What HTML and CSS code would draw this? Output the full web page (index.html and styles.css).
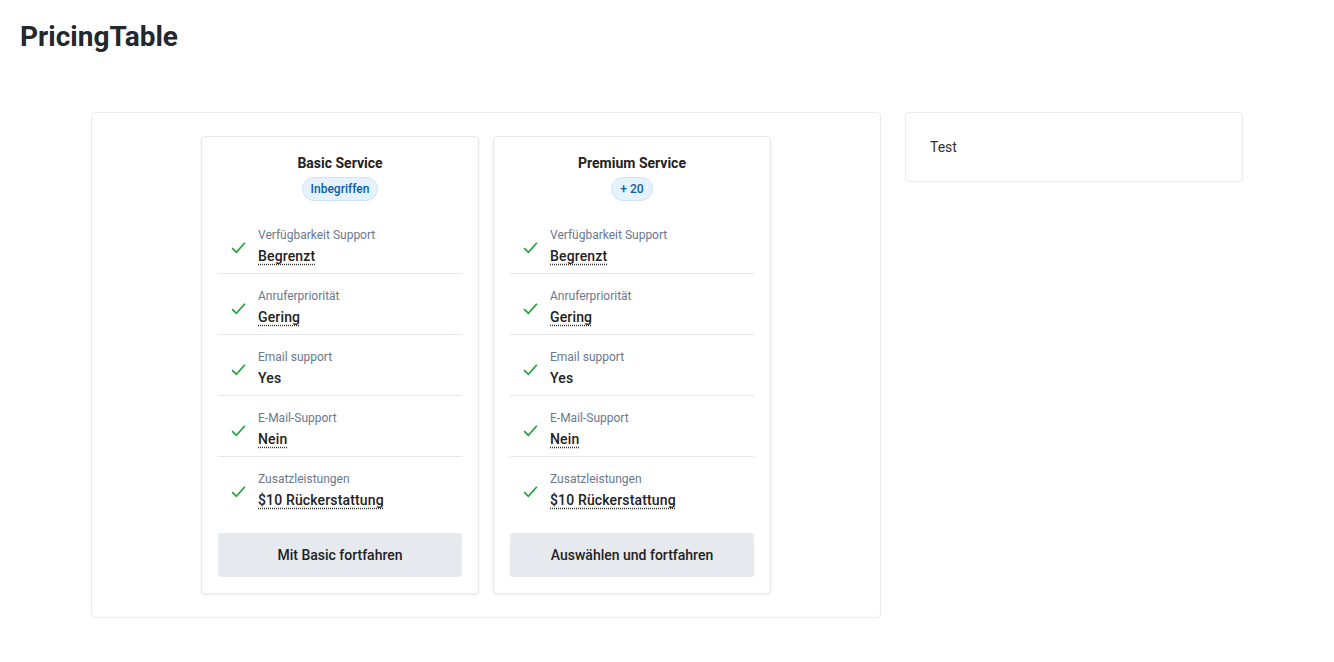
FILE: index.html
```html
<!DOCTYPE html>
<html lang="de">
<head>
<meta charset="utf-8">
<title>PricingTable</title>
<link rel="stylesheet" href="styles.css">
</head>
<body>
<h1 class="page-title">PricingTable</h1>
<div class="layout">
  <div class="panel main-panel">
    <div class="plans">
      <div class="plan">
        <div class="plan-head">
          <div class="plan-name">Basic Service</div>
          <span class="badge">Inbegriffen</span>
        </div>
        <ul class="features">
          <li class="feature"><svg class="check" viewBox="0 0 16 16"><path d="M2 8.5l4 4 8-9"/></svg><div><div class="f-label">Verfügbarkeit Support</div><div class="f-value dotted">Begrenzt</div></div></li>
          <li class="feature"><svg class="check" viewBox="0 0 16 16"><path d="M2 8.5l4 4 8-9"/></svg><div><div class="f-label">Anruferpriorität</div><div class="f-value dotted">Gering</div></div></li>
          <li class="feature"><svg class="check" viewBox="0 0 16 16"><path d="M2 8.5l4 4 8-9"/></svg><div><div class="f-label">Email support</div><div class="f-value">Yes</div></div></li>
          <li class="feature"><svg class="check" viewBox="0 0 16 16"><path d="M2 8.5l4 4 8-9"/></svg><div><div class="f-label">E-Mail-Support</div><div class="f-value dotted">Nein</div></div></li>
          <li class="feature"><svg class="check" viewBox="0 0 16 16"><path d="M2 8.5l4 4 8-9"/></svg><div><div class="f-label">Zusatzleistungen</div><div class="f-value dotted">$10 Rückerstattung</div></div></li>
        </ul>
        <button class="btn">Mit Basic fortfahren</button>
      </div>
      <div class="plan">
        <div class="plan-head">
          <div class="plan-name">Premium Service</div>
          <span class="badge">+ 20</span>
        </div>
        <ul class="features">
          <li class="feature"><svg class="check" viewBox="0 0 16 16"><path d="M2 8.5l4 4 8-9"/></svg><div><div class="f-label">Verfügbarkeit Support</div><div class="f-value dotted">Begrenzt</div></div></li>
          <li class="feature"><svg class="check" viewBox="0 0 16 16"><path d="M2 8.5l4 4 8-9"/></svg><div><div class="f-label">Anruferpriorität</div><div class="f-value dotted">Gering</div></div></li>
          <li class="feature"><svg class="check" viewBox="0 0 16 16"><path d="M2 8.5l4 4 8-9"/></svg><div><div class="f-label">Email support</div><div class="f-value">Yes</div></div></li>
          <li class="feature"><svg class="check" viewBox="0 0 16 16"><path d="M2 8.5l4 4 8-9"/></svg><div><div class="f-label">E-Mail-Support</div><div class="f-value dotted">Nein</div></div></li>
          <li class="feature"><svg class="check" viewBox="0 0 16 16"><path d="M2 8.5l4 4 8-9"/></svg><div><div class="f-label">Zusatzleistungen</div><div class="f-value dotted">$10 Rückerstattung</div></div></li>
        </ul>
        <button class="btn">Auswählen und fortfahren</button>
      </div>
    </div>
  </div>
  <div class="panel side-panel">Test</div>
</div>
</body>
</html>
```
FILE: styles.css
```css
* { box-sizing: border-box; }
body {
  margin: 0;
  font-family: Roboto, "Liberation Sans", sans-serif;
  color: #212529;
  background: #fff;
}
.page-title {
  margin: 0;
  padding: 19px 20px 0;
  font-size: 28px;
  line-height: 36px;
  font-weight: 700;
  color: #23272e;
}
.layout {
  width: 1152px;
  margin: 57px auto 0;
  display: grid;
  grid-template-columns: 790px 338px;
  column-gap: 24px;
  align-items: start;
}
.panel {
  border: 1px solid #ebebeb;
  border-radius: 4px;
  background: #fff;
}
.main-panel {
  padding: 23px 0;
}
.side-panel {
  padding: 24px 24px;
  font-size: 14px;
  line-height: 20px;
  color: #333;
}
.plans {
  display: flex;
  justify-content: center;
  gap: 14px;
}
.plan {
  width: 278px;
  border: 1px solid #e8e8e8;
  border-radius: 4px;
  box-shadow: 0 1px 3px rgba(0,0,0,0.08);
  padding: 16px 16px 16px;
  background: #fff;
}
.plan-head {
  display: flex;
  flex-direction: column;
  align-items: center;
  gap: 4px;
}
.plan-name {
  font-size: 14px;
  line-height: 20px;
  font-weight: 700;
  color: #222;
}
.badge {
  display: inline-block;
  height: 24px;
  line-height: 22px;
  padding: 0 8px;
  border-radius: 12px;
  background: #e6f2fd;
  border: 1px solid #cfe4f7;
  color: #0a5ea8;
  font-size: 12px;
  font-weight: 500;
}
.features {
  list-style: none;
  margin: 12px 0 0;
  padding: 0;
}
.feature {
  display: flex;
  align-items: center;
  gap: 11px;
  height: 61px;
  padding: 6px 0 0 12px;
  border-bottom: 1px solid #e5e8ec;
}
.feature:last-child {
  border-bottom: none;
}
.check {
  width: 17px;
  height: 17px;
  flex: none;
  fill: none;
  stroke: #22a33a;
  stroke-width: 1.6;
  margin-top: 2px;
}
.f-label {
  font-size: 12px;
  line-height: 16px;
  color: #6a7890;
}
.f-value {
  margin-top: 3px;
  font-size: 14px;
  line-height: 20px;
  font-weight: 500;
  letter-spacing: 0.15px;
  color: #222;
  display: inline-block;
}
.dotted {
  text-decoration: underline dotted #333;
  text-underline-offset: 3px;
}
.btn {
  display: block;
  width: 100%;
  height: 44px;
  margin-top: 15px;
  border: none;
  border-radius: 3px;
  background: #e6eaef;
  font-family: inherit;
  font-size: 14px;
  font-weight: 500;
  color: #222;
}
```
